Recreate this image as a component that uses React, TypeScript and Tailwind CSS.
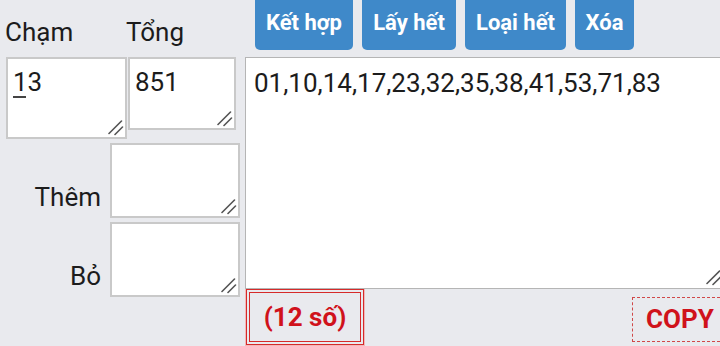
import React from 'react';

const font = { fontFamily: 'Roboto, "Noto Sans", Arial, sans-serif' };

function Grip() {
  return (
    <svg className="pointer-events-none absolute bottom-[3px] right-[3px]" width="16" height="16" viewBox="0 0 16 16">
      <path d="M1 13.5 L13.5 1 M7 14.5 L14.5 7" stroke="#555" strokeWidth="1.6" strokeLinecap="round" />
    </svg>
  );
}

function Box({ value, className, underlineFirst }: { value?: string; className: string; underlineFirst?: boolean }) {
  return (
    <div className={`relative ${className}`}>
      <textarea
        readOnly
        defaultValue={value}
        className="block h-full w-full resize-none border-2 border-[#c9c9c9] bg-white pl-[5px] pt-[8px] text-[26px] leading-[30px] text-[#1c1c1c] outline-none"
        style={font}
      />
      {underlineFirst && <span className="absolute left-[7px] top-[39px] h-[2px] w-[13px] bg-[#444]" />}
      <Grip />
    </div>
  );
}

const buttons = [
  { label: 'Kết hợp', w: 'w-[98px]' },
  { label: 'Lấy hết', w: 'w-[94px]' },
  { label: 'Loại hết', w: 'w-[101px]' },
  { label: 'Xóa', w: 'w-[59px]' },
];

export default function App() {
  return (
    <div className="h-[346px] w-[720px] overflow-hidden bg-[#e9eaee]" style={font}>
      <div className="flex">
        {/* left column */}
        <div className="w-[245px] shrink-0">
          <div className="flex h-[57px] pt-[17px] text-[26px] leading-[30px] text-[#1c1c1c]">
            <span className="ml-[5px] w-[121px]">Chạm</span>
            <span>Tổng</span>
          </div>
          <div className="flex items-start">
            <Box value="13" underlineFirst className="ml-[6px] h-[82px] w-[121px]" />
            <Box value="851" className="ml-[1px] h-[73px] w-[108px]" />
          </div>
          <div className="mt-[4px] flex items-start">
            <span className="mt-[39px] w-[101px] text-right text-[26px] leading-[30px] text-[#1c1c1c]">Thêm</span>
            <Box className="ml-[9px] h-[75px] w-[130px]" />
          </div>
          <div className="mt-[4px] flex items-start">
            <span className="mt-[39px] w-[101px] text-right text-[26px] leading-[30px] text-[#1c1c1c]">Bỏ</span>
            <Box className="ml-[9px] h-[75px] w-[130px]" />
          </div>
        </div>

        {/* right column */}
        <div className="w-[480px] shrink-0">
          <div className="ml-[10px] -mt-[6px] flex h-[63px] gap-[9px]">
            {buttons.map((b) => (
              <div
                key={b.label}
                className={`${b.w} flex h-[56px] items-center justify-center rounded-[5px] bg-[#3f89c9] text-[22px] font-bold text-white`}
              >
                {b.label}
              </div>
            ))}
          </div>
          <div className="relative">
            <textarea
              readOnly
              defaultValue="01,10,14,17,23,32,35,38,41,53,71,83"
              className="block h-[232px] w-[478px] resize-none border border-[#b5b5b5] bg-white pl-[8px] pt-[10px] text-[26px] leading-[30px] text-[#1c1c1c] outline-none"
              style={font}
            />
            <Grip />
          </div>
          <div className="flex items-start">
            <div className="ml-[1px] border-[4px] border-double border-[#d62a2a] p-[1px] shadow-[0_0_0_1px_#f2b8b8]">
              <div className="flex h-[46px] w-[108px] items-center justify-center text-[26px] font-bold text-[#d0121b]">
                (12 số)
              </div>
            </div>
            <div className="ml-[268px] mt-[8px] flex h-[45px] w-[100px] items-center border border-dashed border-[#d04848] pl-[13px] text-[26px] font-bold text-[#d0121b]">
              COPY
            </div>
          </div>
        </div>
      </div>
    </div>
  );
}
